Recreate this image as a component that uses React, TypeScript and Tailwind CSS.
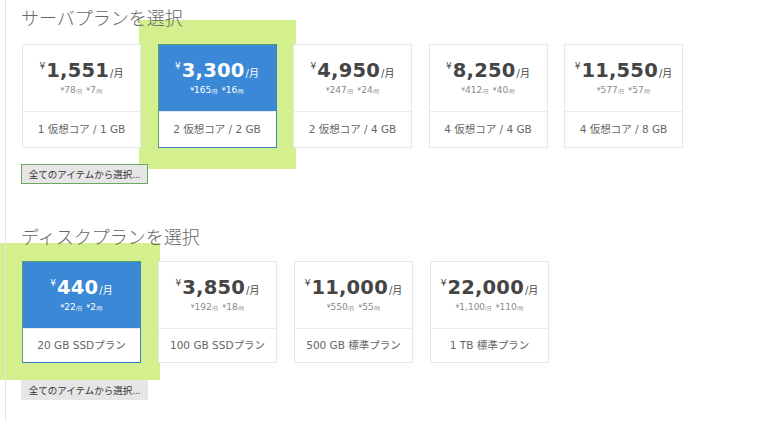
import React from 'react';

type Plan = { price: string; day: string; hour: string; label: string; selected?: boolean };

const serverPlans: Plan[] = [
  { price: '1,551', day: '78', hour: '7', label: '1 仮想コア / 1 GB' },
  { price: '3,300', day: '165', hour: '16', label: '2 仮想コア / 2 GB', selected: true },
  { price: '4,950', day: '247', hour: '24', label: '2 仮想コア / 4 GB' },
  { price: '8,250', day: '412', hour: '40', label: '4 仮想コア / 4 GB' },
  { price: '11,550', day: '577', hour: '57', label: '4 仮想コア / 8 GB' },
];

const diskPlans: Plan[] = [
  { price: '440', day: '22', hour: '2', label: '20 GB SSDプラン', selected: true },
  { price: '3,850', day: '192', hour: '18', label: '100 GB SSDプラン' },
  { price: '11,000', day: '550', hour: '55', label: '500 GB 標準プラン' },
  { price: '22,000', day: '1,100', hour: '110', label: '1 TB 標準プラン' },
];

const jp = { fontFamily: '"DejaVu Sans", "Noto Sans CJK JP", sans-serif' };

const PlanCard = ({ plan, tall }: { plan: Plan; tall: boolean }) => {
  const sel = plan.selected;
  return (
    <div
      className={
        'w-[119px] flex flex-col bg-white border ' +
        (sel ? 'border-[#5a9e6a] border-r-[#3b7fc6] border-b-[#3b7fc6]' : 'border-[#e6e6e6]')
      }
    >
      <div
        className={
          'flex flex-col items-center justify-center h-[66px] ' +
          (sel ? 'bg-[#3a88d6] text-white' : 'text-[#454545]')
        }
      >
        <div className="flex items-baseline leading-none" style={jp}>
          <span className="text-[9px] self-start mt-[1px] mr-[1px]">¥</span>
          <span className="text-[19.5px] font-bold tracking-[0.2px]">{plan.price}</span>
          <span className="text-[10px] ml-[1px]">/月</span>
        </div>
        <div
          className={'flex items-baseline gap-[4px] mt-[5px] leading-none ' + (sel ? 'text-white' : 'text-[#8a8a8a]')}
          style={jp}
        >
          <span className="text-[9px]">
            <span className="text-[6px] align-top">¥</span>
            {plan.day}
            <span className="text-[5px]">/日</span>
          </span>
          <span className="text-[9px]">
            <span className="text-[6px] align-top">¥</span>
            {plan.hour}
            <span className="text-[5px]">/時</span>
          </span>
        </div>
      </div>
      <div
        className={
          'flex items-center justify-center text-[10.5px] text-[#666] border-t border-[#ececec] ' +
          (tall ? 'h-[36px]' : 'h-[34px]')
        }
        style={jp}
      >
        {plan.label}
      </div>
    </div>
  );
};

const AllButton = ({ active }: { active?: boolean }) => (
  <button
    className={
      'w-[127px] h-[20px] bg-[#e6e6e6] text-[#333] text-[9.5px] flex items-center justify-center ' +
      (active ? 'border border-[#6aa85e]' : 'border border-[#e6e6e6]')
    }
    style={{ fontFamily: '"Noto Sans CJK JP", sans-serif' }}
  >
    全てのアイテムから選択...
  </button>
);

export default function App() {
  return (
    <div className="relative w-[774px] h-[422px] bg-white overflow-hidden">
      {/* annotation highlights */}
      <div className="absolute left-[139px] top-[20px] w-[157px] h-[149px] bg-[#d4f08e]" />
      <div className="absolute left-0 top-[243px] w-[160px] h-[137px] bg-[#d4f08e]" />

      <div className="relative ml-[5px] h-full border-l border-[#e4e4e4] pl-[15px]">
        <h2
          className="text-[18px] leading-[28px] pt-[3px] text-[#666] font-light"
          style={{ fontFamily: '"Noto Sans CJK JP", sans-serif' }}
        >
          サーバプランを選択
        </h2>
        <div className="flex gap-[16.5px] mt-[13px] ml-[1px]">
          {serverPlans.map((p) => (
            <PlanCard key={p.price} plan={p} tall />
          ))}
        </div>
        <div className="mt-[16px]">
          <AllButton active />
        </div>

        <h2
          className="text-[18px] leading-[28px] mt-[38px] text-[#666] font-light"
          style={{ fontFamily: '"Noto Sans CJK JP", sans-serif' }}
        >
          ディスクプランを選択
        </h2>
        <div className="flex gap-[17px] mt-[11px] ml-[1px]">
          {diskPlans.map((p) => (
            <PlanCard key={p.price} plan={p} tall={false} />
          ))}
        </div>
        <div className="mt-[17px]">
          <AllButton />
        </div>
      </div>
    </div>
  );
}
